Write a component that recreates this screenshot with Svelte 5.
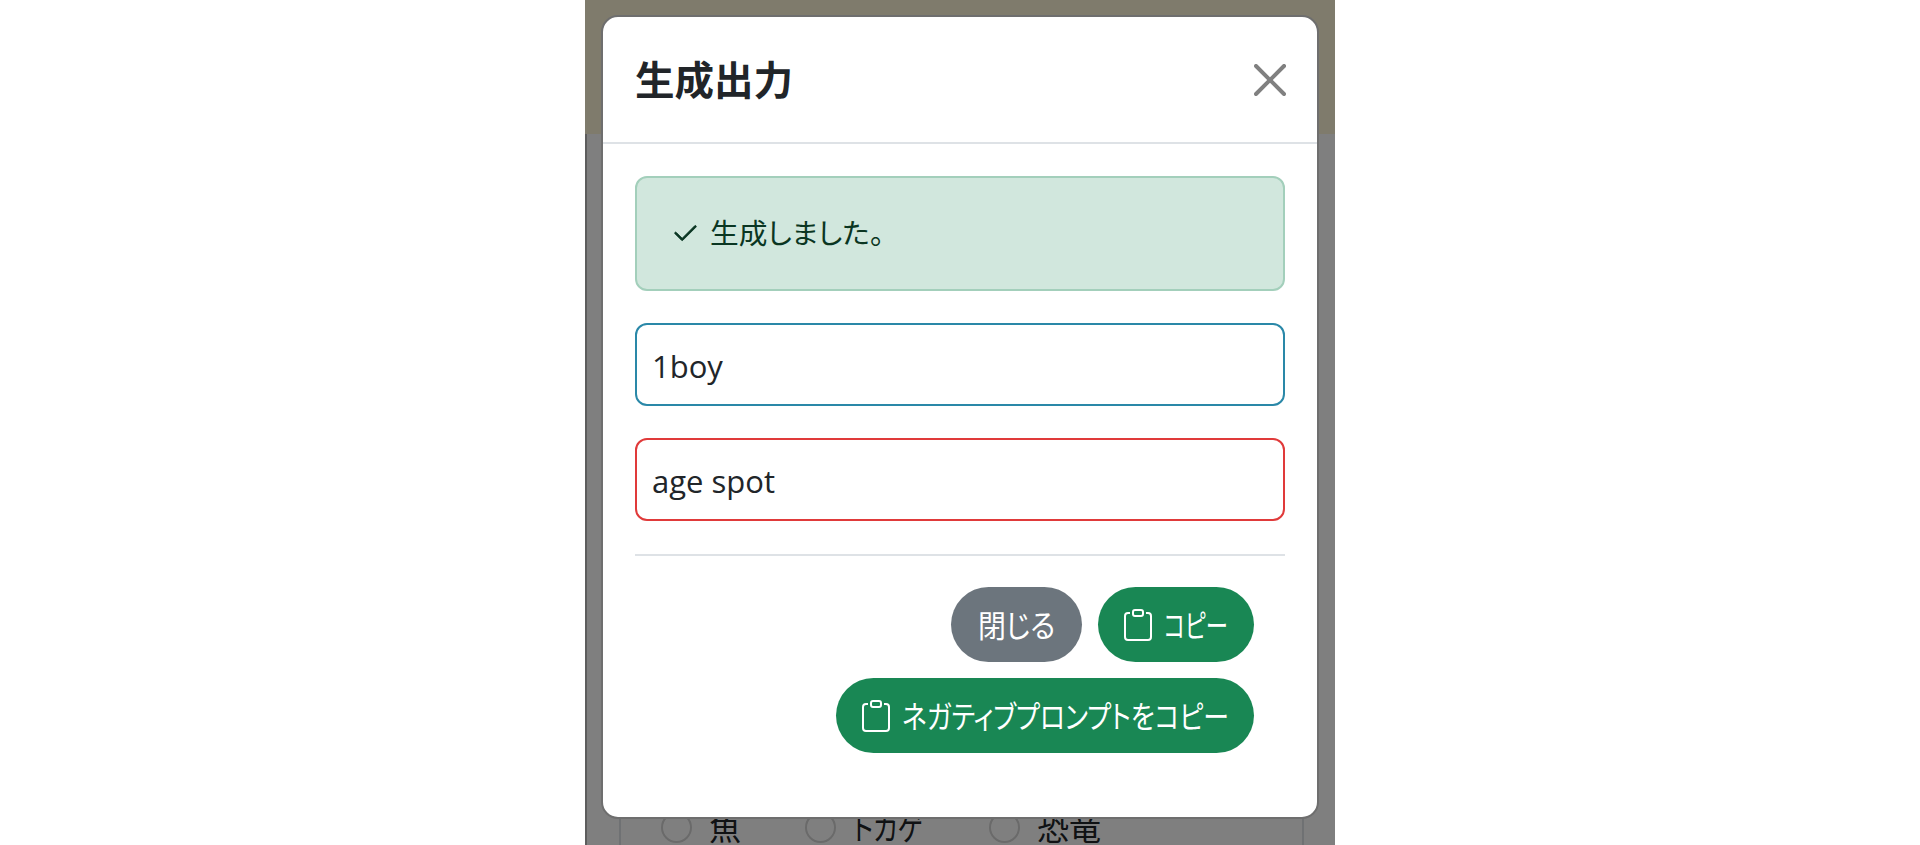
<script>
  const animals = [
    { name: '魚', cls: '' },
    { name: 'トカゲ', cls: 'tight' },
    { name: '恐竜', cls: '' }
  ];
</script>

<div class="stage">
  <div class="page">
    <header class="band"></header>
    <section class="box">
      <div class="radios">
        {#each animals as a}
          <label class="radio"><input type="radio" name="animal" /><span class={a.cls}>{a.name}</span></label>
        {/each}
      </div>
    </section>
  </div>

  <div class="backdrop">
    <div class="dialog">
      <div class="head">
        <h5>生成出力</h5>
        <button class="close" aria-label="閉じる">
          <svg viewBox="0 0 16 16" width="32" height="32"><path d="M.293.293a1 1 0 011.414 0L8 6.586 14.293.293a1 1 0 111.414 1.414L9.414 8l6.293 6.293a1 1 0 01-1.414 1.414L8 9.414l-6.293 6.293a1 1 0 01-1.414-1.414L6.586 8 .293 1.707a1 1 0 010-1.414z" fill="#808080"/></svg>
        </button>
      </div>
      <div class="body">
        <div class="alert">
          <svg class="check" viewBox="0 0 16 16" width="30" height="30"><path d="M13.854 3.646a.5.5 0 0 1 0 .708l-7 7a.5.5 0 0 1-.708 0l-3.5-3.5a.5.5 0 1 1 .708-.708L6.5 10.293l6.646-6.647a.5.5 0 0 1 .708 0z" fill="currentColor" stroke="currentColor" stroke-width=".45"/></svg>
          <span>生成しました。</span>
        </div>
        <input class="field pos" value="1boy" readonly />
        <input class="field neg" value="age spot" readonly />
        <div class="foot">
          <button class="btn gray"><span class="label close-label">閉じる</span></button>
          <button class="btn green">
            <svg viewBox="0 0 16 16" width="32" height="32" fill="currentColor"><path d="M4 1.5H3a2 2 0 0 0-2 2V14a2 2 0 0 0 2 2h10a2 2 0 0 0 2-2V3.5a2 2 0 0 0-2-2h-1v1h1a1 1 0 0 1 1 1V14a1 1 0 0 1-1 1H3a1 1 0 0 1-1-1V3.5a1 1 0 0 1 1-1h1v-1z"/><path d="M9.5 1a.5.5 0 0 1 .5.5v1a.5.5 0 0 1-.5.5h-3a.5.5 0 0 1-.5-.5v-1a.5.5 0 0 1 .5-.5h3zm-3-1A1.5 1.5 0 0 0 5 1.5v1A1.5 1.5 0 0 0 6.5 4h3A1.5 1.5 0 0 0 11 2.5v-1A1.5 1.5 0 0 0 9.5 0h-3z"/></svg>
            <span class="label copy-label">コピー</span>
          </button>
          <button class="btn green">
            <svg viewBox="0 0 16 16" width="32" height="32" fill="currentColor"><path d="M4 1.5H3a2 2 0 0 0-2 2V14a2 2 0 0 0 2 2h10a2 2 0 0 0 2-2V3.5a2 2 0 0 0-2-2h-1v1h1a1 1 0 0 1 1 1V14a1 1 0 0 1-1 1H3a1 1 0 0 1-1-1V3.5a1 1 0 0 1 1-1h1v-1z"/><path d="M9.5 1a.5.5 0 0 1 .5.5v1a.5.5 0 0 1-.5.5h-3a.5.5 0 0 1-.5-.5v-1a.5.5 0 0 1 .5-.5h3zm-3-1A1.5 1.5 0 0 0 5 1.5v1A1.5 1.5 0 0 0 6.5 4h3A1.5 1.5 0 0 0 11 2.5v-1A1.5 1.5 0 0 0 9.5 0h-3z"/></svg>
            <span class="label neg-label">ネガティブプロンプトをコピー</span>
          </button>
        </div>
      </div>
    </div>
  </div>
</div>

<style>
  :global(body) {
    margin: 0;
    background: #fff;
    font-family: "Open Sans", "Noto Sans CJK JP", sans-serif;
    color: #212529;
  }
  .stage {
    position: relative;
    width: 750px;
    height: 845px;
    margin: 0 auto;
    overflow: hidden;
    background: #fff;
    font-feature-settings: "palt";
  }
  .page {
    border-left: 2px solid #bbb;
    height: 100%;
  }
  .band {
    height: 134px;
    background: #fff7d8;
    margin-left: -2px;
  }
  .box {
    margin: 0 31px 0 32px;
    height: 800px;
    box-sizing: border-box;
    padding: 677px 0 0 40px;
    border: 2px solid #dee2e6;
    border-top: 0;
  }
  .radios {
    display: flex;
    gap: 64px;
    font-size: 32px;
    line-height: 31px;
  }
  .radio {
    display: flex;
    align-items: center;
    gap: 17px;
  }
  .radio input {
    appearance: none;
    width: 31px;
    height: 31px;
    margin: 1px 0 0;
    border: 2px solid #d4d4d4;
    border-radius: 50%;
    box-sizing: border-box;
  }
  .tight {
    display: block;
    width: 72px;
    white-space: nowrap;
    transform: scaleX(0.82);
    transform-origin: left center;
  }
  .backdrop {
    position: absolute;
    inset: 0;
    background: rgba(0, 0, 0, 0.5);
  }
  .dialog {
    width: 718px;
    height: 804px;
    box-sizing: border-box;
    margin: 15px 0 0 16px;
    background: #fff;
    border: 2px solid #6e6e6e;
    border-radius: 17px;
  }
  .head {
    display: flex;
    justify-content: space-between;
    align-items: center;
    height: 125px;
    padding: 0 31px 0 32px;
    border-bottom: 2px solid #dee2e6;
  }
  h5 {
    margin: 0;
    font-size: 39.5px;
    font-weight: 700;
    line-height: 60px;
    font-feature-settings: normal;
  }
  .close {
    display: block;
    padding: 0;
    border: 0;
    background: none;
    line-height: 0;
  }
  .body {
    display: flex;
    flex-direction: column;
    gap: 32px;
    padding: 32px 32px 0 32px;
  }
  .alert {
    display: flex;
    align-items: center;
    gap: 10px;
    height: 115px;
    box-sizing: border-box;
    padding: 0 33px 4px;
    background: #d1e7dd;
    border: 2px solid #a3cfbb;
    border-radius: 12px;
    color: #0a3622;
    font-size: 28.7px;
  }
  .check { flex: none; margin-top: 4px; }
  .field {
    display: block;
    height: 83px;
    box-sizing: border-box;
    width: 100%;
    padding: 2px 15px 0;
    background: #fff;
    border: 2px solid #ccc;
    border-radius: 12px;
    font: inherit;
    font-size: 31px;
    color: #212529;
    outline: 0;
  }
  .pos { border-color: #2a88a8; }
  .neg { border-color: #e03a3a; }
  .foot {
    display: flex;
    flex-wrap: wrap;
    justify-content: flex-end;
    gap: 16px;
    padding: 31px 31px 0 0;
    margin-top: 1px;
    border-top: 2px solid #dee2e6;
  }
  .btn {
    display: flex;
    align-items: center;
    gap: 10px;
    height: 75px;
    padding: 0 27px 0 24px;
    border: 0;
    border-radius: 38px;
    color: #fff;
    font: inherit;
    font-size: 31px;
    white-space: nowrap;
  }
  .label {
    display: block;
    padding-bottom: 3px;
    transform-origin: left center;
  }
  .close-label { width: 77px; transform: scaleX(0.9); }
  .copy-label { width: 63px; transform: scaleX(0.72); }
  .neg-label { width: 325px; transform: scaleX(0.834); }
  .gray { background: #6c757d; padding: 0 27px; }
  .green { background: #198754; }
</style>
